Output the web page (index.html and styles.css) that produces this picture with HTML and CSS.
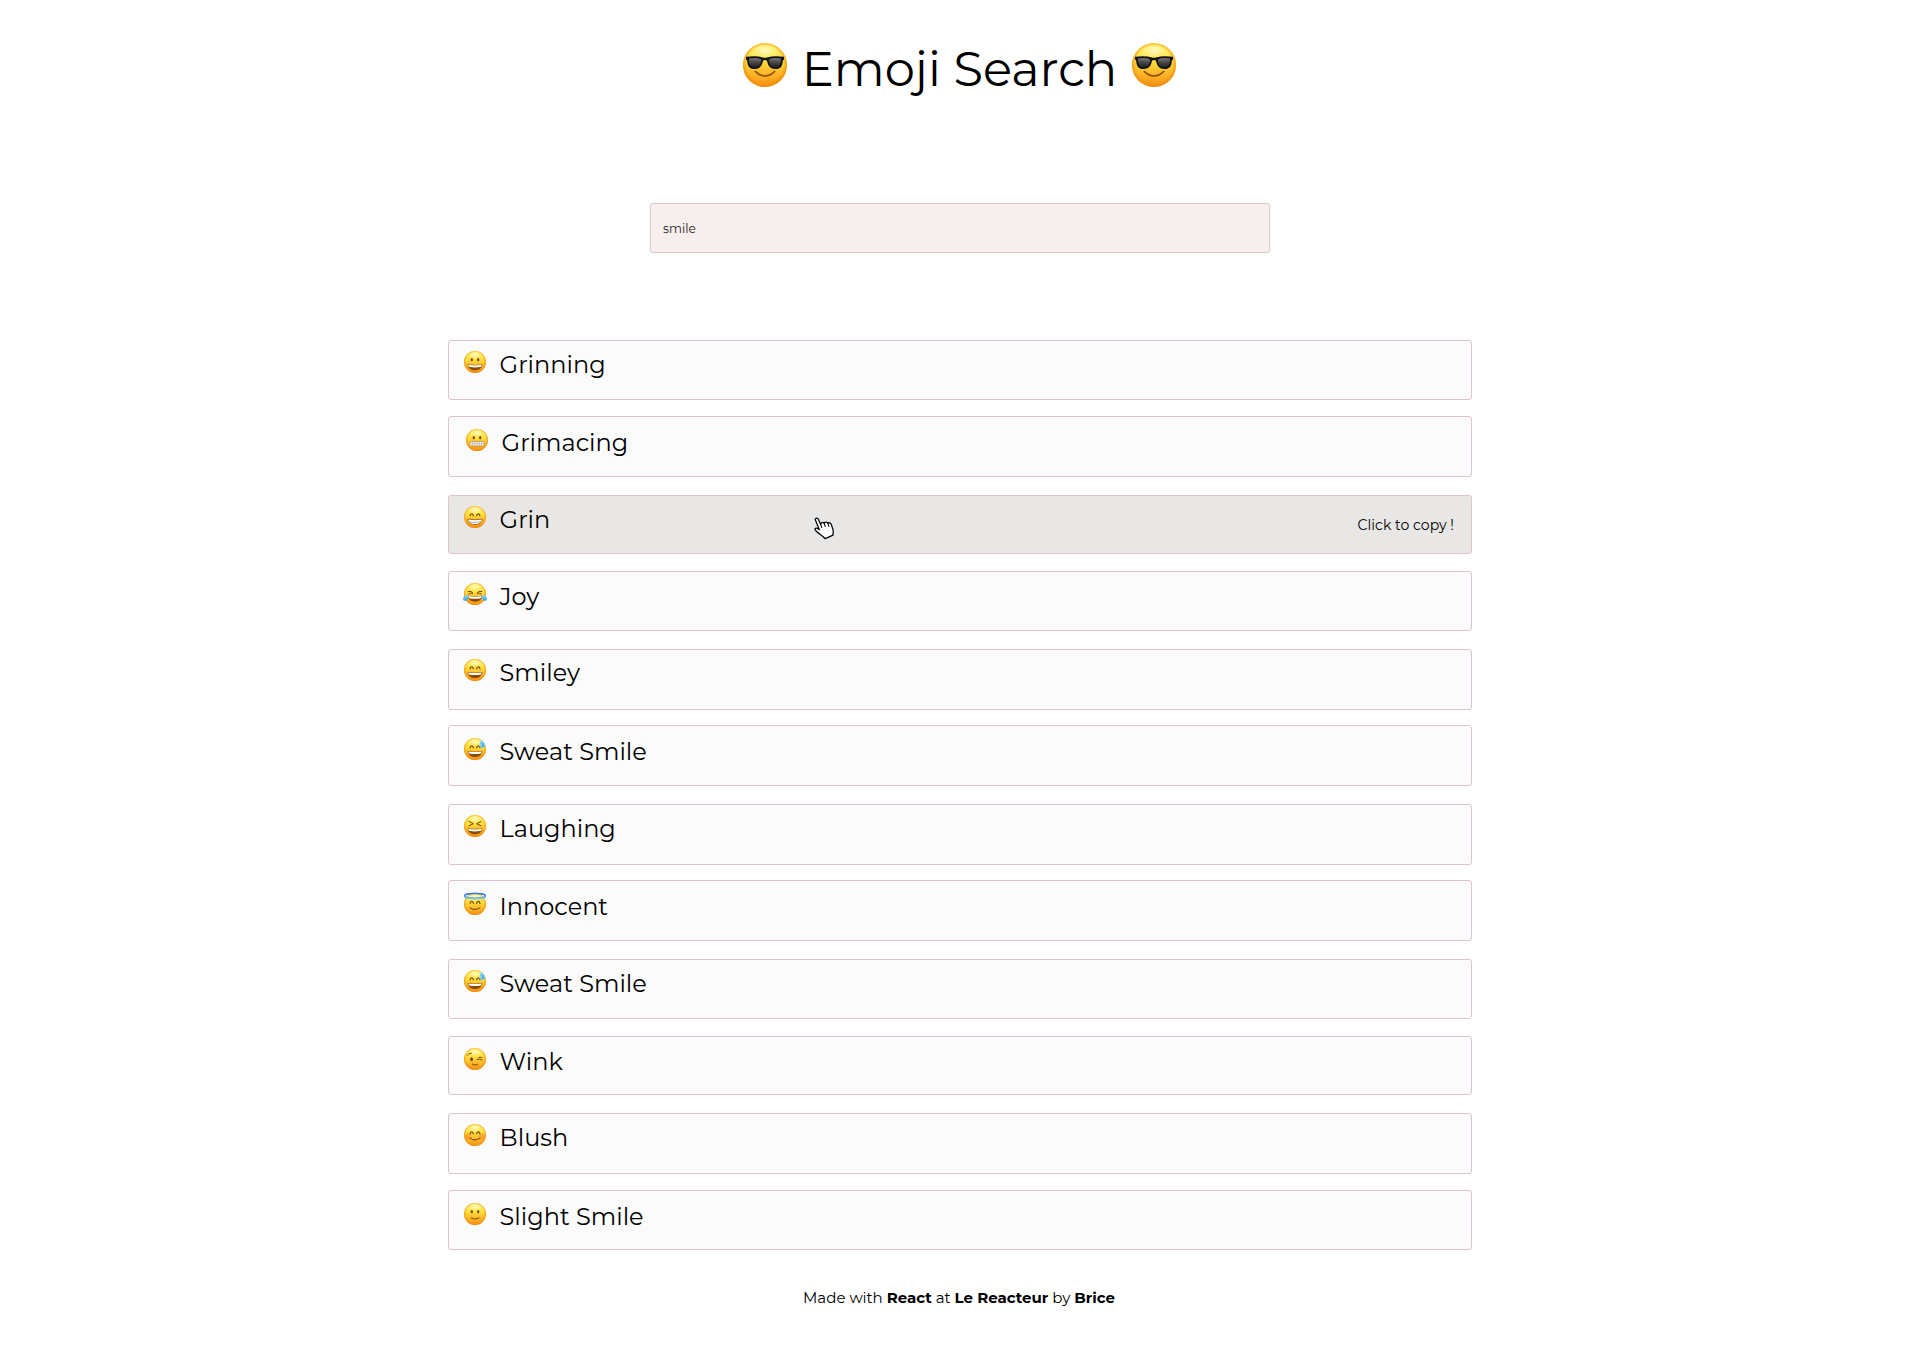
FILE: index.html
```html
<!DOCTYPE html>
<html lang="en">
<head>
<meta charset="utf-8">
<title>Emoji Search</title>
<link rel="stylesheet" href="styles.css">
</head>
<body>
<svg class="defs" width="0" height="0" aria-hidden="true">
  <defs>
    <linearGradient id="skin" x1="0" y1="0" x2="0" y2="1">
      <stop offset="0" stop-color="#fff36c"/>
      <stop offset=".42" stop-color="#fedb3c"/>
      <stop offset=".75" stop-color="#fcb024"/>
      <stop offset="1" stop-color="#f59014"/>
    </linearGradient>
    <radialGradient id="rim" cx=".5" cy=".48" r=".52">
      <stop offset=".78" stop-color="#f39a10" stop-opacity="0"/>
      <stop offset="1" stop-color="#ee8a0c" stop-opacity=".95"/>
    </radialGradient>
    <radialGradient id="shine" cx=".5" cy=".35" r=".6">
      <stop offset="0" stop-color="#fffde0" stop-opacity=".85"/>
      <stop offset="1" stop-color="#fff36c" stop-opacity="0"/>
    </radialGradient>
    <linearGradient id="lens" x1="0" y1="0" x2="0" y2="1">
      <stop offset="0" stop-color="#777"/>
      <stop offset=".5" stop-color="#444"/>
      <stop offset="1" stop-color="#222"/>
    </linearGradient>
    <linearGradient id="water" x1="0" y1="0" x2="0" y2="1">
      <stop offset="0" stop-color="#8fdcfb"/>
      <stop offset="1" stop-color="#2fa4e8"/>
    </linearGradient>
    <g id="face">
      <circle cx="12" cy="12" r="11" fill="url(#skin)"/>
      <ellipse cx="12" cy="6.2" rx="8" ry="4.6" fill="url(#shine)"/>
      <circle cx="12" cy="12" r="11" fill="url(#rim)"/>
    </g>
    <g id="arches" fill="none" stroke="#6b3a08" stroke-width="1.1" stroke-linecap="round">
      <path d="M7 10.8C7.4 8 10 8 10.4 10.8M13.6 10.8C14 8 16.6 8 17 10.8"/>
    </g>
    <g id="dots" fill="#7a450c">
      <ellipse cx="8.8" cy="9.7" rx="1.15" ry="1.65"/>
      <ellipse cx="15.2" cy="9.7" rx="1.15" ry="1.65"/>
    </g>
    <g id="laugh">
      <path d="M4.6 14.2Q12 15.8 19.4 14.2C18.9 18.3 16 20.4 12 20.4S5.1 18.3 4.6 14.2Z" fill="#8a4b08"/>
      <path d="M5.2 14.7Q12 16.1 18.8 14.7C18.5 16.4 17.8 17 16.8 17.1Q12 17.7 7.2 17.1C6.2 17 5.5 16.4 5.2 14.7Z" fill="#fff"/>
    </g>
    <symbol id="sunglasses" viewBox="0 0 24 24">
      <use href="#face"/>
      <path d="M7.1 15.2Q12 19.8 16.9 15.2" fill="none" stroke="#8f4e0c" stroke-width=".75" stroke-linecap="round"/>
      <path d="M2.5 7.9Q7.5 7.1 11 8.2Q12 8.5 13 8.2Q16.5 7.1 21.5 7.9V9.2L20.9 9.7C20.8 12.8 19.5 14 17.1 14C14.7 14 13.5 12.5 13 9.9Q12 9.2 11 9.9C10.5 12.5 9.3 14 6.9 14C4.5 14 3.2 12.8 3.1 9.7L2.5 9.2Z" fill="#111"/>
      <path d="M4 8.8Q7.5 8 10.2 9.2C9.9 11.8 8.9 13.2 6.9 13.2C4.7 13.2 3.9 11.6 4 8.8ZM20 8.8Q16.5 8 13.8 9.2C14.1 11.8 15.1 13.2 17.1 13.2C19.3 13.2 20.1 11.6 20 8.8Z" fill="url(#lens)"/>
    </symbol>
    <symbol id="grinning" viewBox="0 0 24 24"><use href="#face"/><use href="#dots"/><use href="#laugh"/></symbol>
    <symbol id="grimacing" viewBox="0 0 24 24">
      <use href="#face"/><use href="#dots"/>
      <rect x="4.7" y="13.4" width="14.6" height="4.6" rx="1.4" fill="#f7f3ee" stroke="#a87a45" stroke-width=".6"/>
      <path d="M5 15.7H19M7.4 13.6V17.8M9.7 13.6V17.8M12 13.6V17.8M14.3 13.6V17.8M16.6 13.6V17.8" stroke="#a89b8e" stroke-width=".5" fill="none"/>
    </symbol>
    <symbol id="grin" viewBox="0 0 24 24">
      <use href="#face"/><use href="#arches"/>
      <path d="M4.6 14.1Q12 15.3 19.4 14.1C18.9 17.9 16 19.6 12 19.6S5.1 17.9 4.6 14.1Z" fill="#fff" stroke="#96560d" stroke-width=".8"/>
      <path d="M5.6 16.8Q12 17.9 18.4 16.8" stroke="#a89b8e" stroke-width=".8" fill="none"/>
    </symbol>
    <symbol id="joy" viewBox="0 0 26 24" overflow="visible">
      <g transform="translate(1 0)">
        <use href="#face"/>
        <path d="M5.2 9.4Q8.6 8.6 10 11.3Q7.8 10.6 5.8 11.8M18.8 9.4Q15.4 8.6 14 11.3Q16.2 10.6 18.2 11.8" fill="none" stroke="#6b3a08" stroke-width=".9" stroke-linecap="round"/>
        <use href="#laugh" transform="translate(0 -.6)"/>
        <path d="M5.2 12.8C2.6 13 .1 14.6 0 16.9C.1 19.4 4.3 19.5 5 16.4ZM18.8 12.8C21.4 13 23.9 14.6 24 16.9C23.9 19.4 19.7 19.5 19 16.4Z" fill="url(#water)"/>
      </g>
    </symbol>
    <symbol id="smiley" viewBox="0 0 24 24"><use href="#face"/><use href="#arches"/><use href="#laugh" transform="translate(0 -.3)"/></symbol>
    <symbol id="sweat" viewBox="0 0 24 24">
      <use href="#smiley" width="24" height="24"/>
      <path d="M18.3 2.2C20.2 4.6 22 6 22 8C22 10 20.8 11 19.2 11S16.6 9.8 16.6 8C16.6 6 17.8 4.6 18.3 2.2Z" fill="url(#water)" stroke="#e8f8ff" stroke-width=".4"/>
      <path d="M17.9 7.4C17.7 8.6 18.2 9.4 18.9 9.8" fill="none" stroke="#fff" stroke-width=".7" stroke-linecap="round"/>
    </symbol>
    <symbol id="laughing" viewBox="0 0 24 24">
      <use href="#face"/>
      <path d="M6 7.4L10.3 9.7L6 11.8M18 7.4L13.7 9.7L18 11.8" fill="none" stroke="#6b3a08" stroke-width=".95" stroke-linecap="round" stroke-linejoin="round"/>
      <use href="#laugh"/>
    </symbol>
    <symbol id="innocent" viewBox="0 0 24 24">
      <use href="#face"/><use href="#arches" transform="translate(0 .6)"/>
      <path d="M7 15.8Q12 19.4 17 15.8" fill="none" stroke="#6b3a08" stroke-width=".95" stroke-linecap="round"/>
      <ellipse cx="12" cy="3.9" rx="10.4" ry="2.4" fill="none" stroke="#4f9bf0" stroke-width="1.6"/>
      <path d="M1.6 3.4C2.4 .6 21.6 .6 22.4 3.4" fill="none" stroke="#3f68d8" stroke-width="1.1"/>
      <path d="M3.5 5.7Q12 7.7 20.5 5.7" fill="none" stroke="#7cc6fb" stroke-width="1.6"/>
    </symbol>
    <symbol id="wink" viewBox="0 0 24 24">
      <use href="#face"/>
      <ellipse cx="8.6" cy="12.2" rx="1.3" ry="1.9" fill="#6b3a08"/>
      <path d="M4.3 8.4Q5.6 6.1 8.2 6.2M14 12.5Q16.2 11.6 19 12.9M15.6 10.8Q17.3 9.8 19 10.4M9.3 17.2Q11.9 19.4 14.6 17.4" fill="none" stroke="#6b3a08" stroke-width=".9" stroke-linecap="round"/>
    </symbol>
    <symbol id="blush" viewBox="0 0 24 24">
      <use href="#face"/>
      <circle cx="5.2" cy="13.6" r="3.2" fill="#fb7d2c" opacity=".45"/>
      <circle cx="18.8" cy="13.6" r="3.2" fill="#fb7d2c" opacity=".45"/>
      <use href="#arches"/>
      <path d="M6.9 15Q12 19.2 17.1 15" fill="none" stroke="#6b3a08" stroke-width=".95" stroke-linecap="round"/>
    </symbol>
    <symbol id="slight" viewBox="0 0 24 24">
      <use href="#face"/><use href="#dots"/>
      <path d="M8 16Q12 18.4 16 16" fill="none" stroke="#6b3a08" stroke-width=".85" stroke-linecap="round"/>
    </symbol>
  </defs>
</svg>

<header class="header">
  <svg class="hero-emoji"><use href="#sunglasses"/></svg>
  <h1 class="title">Emoji Search</h1>
  <svg class="hero-emoji"><use href="#sunglasses"/></svg>
</header>

<main class="main">
  <input class="search" type="text" value="smile" aria-label="Search">
  <ul class="results">
    <li class="row"><svg class="emoji"><use href="#grinning"/></svg><span class="name">Grinning</span></li>
    <li class="row"><svg class="emoji"><use href="#grimacing"/></svg><span class="name">Grimacing</span></li>
    <li class="row active"><svg class="emoji"><use href="#grin"/></svg><span class="name">Grin</span><span class="hint">Click to copy !</span>
      <svg class="pointer" viewBox="0 0 22 24"><path d="M1.2 2.4C1.6.6 3.9.6 4.6 2.4L7 8.1C7 5.6 9.6 4.9 10.6 6.6C11.2 4.9 13.7 4.9 14.5 6.6C15.5 5.4 17.6 5.9 18.1 7.7L20 13.6C20.6 16 19.6 17 20 19L11.6 22.6C10 19.9 5.4 17.9 2.2 14.6C-.2 12.4 1.6 10.8 3.7 11.9L5.6 13.3Z" fill="#fff" stroke="#000" stroke-width="1.3" stroke-linejoin="round"/><path d="M7 8.1L8.3 11.3M10.6 6.6L12 10.1M14.5 6.6L15.8 10" stroke="#000" stroke-width="1.1" fill="none"/></svg>
    </li>
    <li class="row"><svg class="emoji"><use href="#joy" x="-1" width="26" height="24"/></svg><span class="name">Joy</span></li>
    <li class="row"><svg class="emoji"><use href="#smiley"/></svg><span class="name">Smiley</span></li>
    <li class="row"><svg class="emoji"><use href="#sweat"/></svg><span class="name">Sweat Smile</span></li>
    <li class="row"><svg class="emoji"><use href="#laughing"/></svg><span class="name">Laughing</span></li>
    <li class="row"><svg class="emoji"><use href="#innocent"/></svg><span class="name">Innocent</span></li>
    <li class="row"><svg class="emoji"><use href="#sweat"/></svg><span class="name">Sweat Smile</span></li>
    <li class="row"><svg class="emoji"><use href="#wink"/></svg><span class="name">Wink</span></li>
    <li class="row"><svg class="emoji"><use href="#blush"/></svg><span class="name">Blush</span></li>
    <li class="row"><svg class="emoji"><use href="#slight"/></svg><span class="name">Slight Smile</span></li>
  </ul>
</main>

<footer class="footer">Made with <b>React</b> at <b>Le Reacteur</b> by <b>Brice</b></footer>
</body>
</html>
```
FILE: styles.css
```css
* { box-sizing: border-box; }

body {
  margin: 0;
  min-height: 1356px;
  background: #fff;
  color: #000;
  font-family: Montserrat, Inter, sans-serif;
}

.defs { position: absolute; }

.header {
  display: flex;
  justify-content: center;
  gap: 13px;
  padding: 41px 1px 0 0;
  height: 203px;
}
.hero-emoji { width: 48px; height: 48px; }
.title {
  margin: 0;
  font-size: 48px;
  font-weight: 400;
  line-height: 56px;
  white-space: nowrap;
}

.main {
  display: flex;
  flex-direction: column;
  align-items: center;
}
.search {
  width: 620px;
  height: 50px;
  padding: 0 12px;
  border: 1px solid #dcc6c8;
  border-radius: 3px;
  background: #f7efee;
  color: #222;
  font: 400 12.2px Montserrat, Inter, sans-serif;
  outline: none;
}

.results {
  width: 1024px;
  margin: 87px 0 0;
  padding: 0;
  list-style: none;
}
.row {
  position: relative;
  display: flex;
  align-items: flex-start;
  gap: 12.6px;
  height: 61px;
  margin-bottom: 18px;
  padding: 9px 17px 0 14px;
  border: 1px solid #dcc6c8;
  border-radius: 3px;
  background: #fbfbfb;
}
.row:nth-child(1) { height: 60px; margin-bottom: 16px; }
.row:nth-child(2) { padding-top: 11px; padding-left: 16px; }
.row:nth-child(3) { height: 59px; margin-bottom: 17px; }
.row:nth-child(4) { height: 60px; padding-top: 10px; }
.row:nth-child(5) { margin-bottom: 15px; padding-top: 8px; }
.row:nth-child(6) { padding-top: 11px; }
.row:nth-child(7) { margin-bottom: 15px; }
.row:nth-child(8) { padding-top: 11px; }
.row:nth-child(9) { height: 60px; margin-bottom: 17px; }
.row:nth-child(10) { height: 59px; padding-top: 10px; }
.row:nth-child(11) { margin-bottom: 16px; }
.row:nth-child(12) { height: 60px; margin-bottom: 0; padding-top: 11px; }
.active { background: #e8e7e5; }

.emoji {
  width: 24px;
  height: 24px;
  margin-top: .4px;
  overflow: visible;
}
.name {
  font-size: 24px;
  line-height: 30px;
}
.hint {
  margin-left: auto;
  padding-top: 10px;
  font-size: 14.1px;
  line-height: 21px;
}
.pointer {
  position: absolute;
  left: 364.5px;
  top: 20.5px;
  width: 21px;
  height: 23px;
}

.footer {
  margin-top: 38px;
  padding-right: 2px;
  font-size: 15px;
  line-height: 20px;
  text-align: center;
}
```
